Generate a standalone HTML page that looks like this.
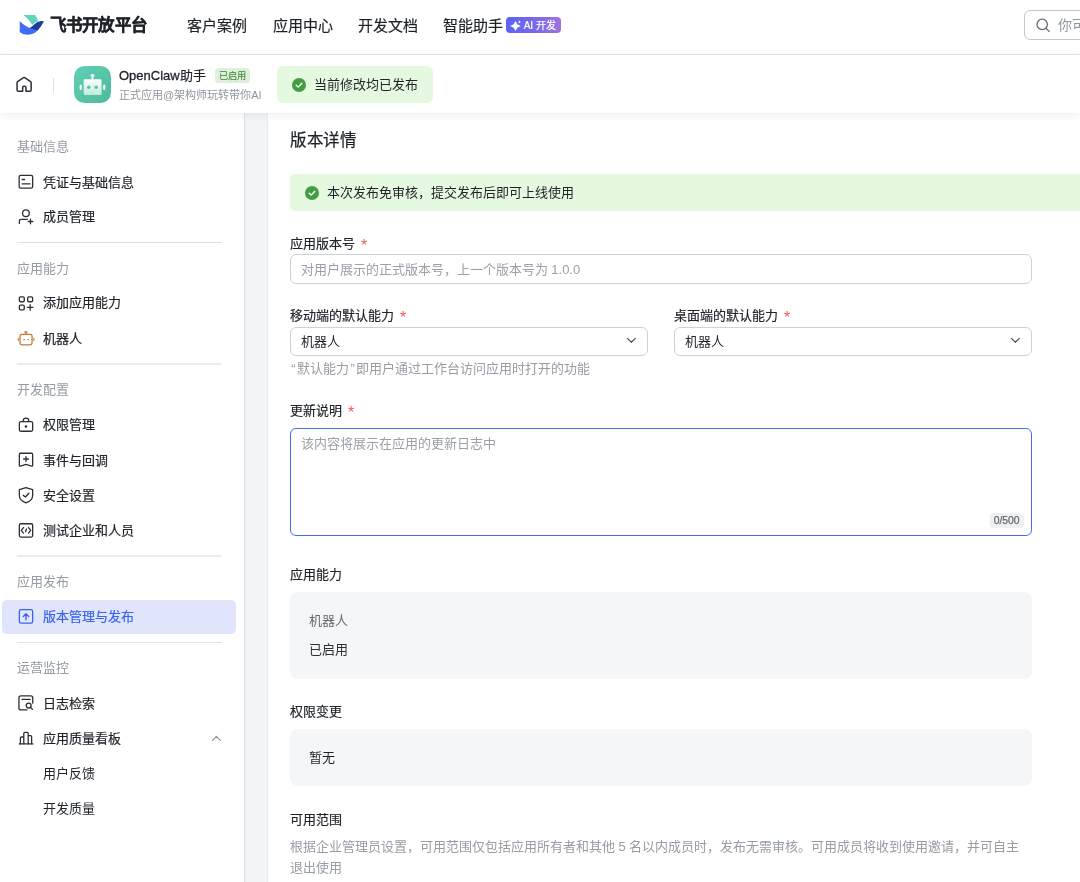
<!DOCTYPE html>
<html lang="zh-CN">
<head>
<meta charset="utf-8">
<title>飞书开放平台</title>
<style>
*{box-sizing:border-box;margin:0;padding:0}
html,body{width:1080px;height:882px;overflow:hidden;background:#fff}
body{font-family:"Liberation Sans",sans-serif;color:#1f2329;position:relative;font-size:13px}
#root{position:absolute;left:0;top:0;width:1080px;height:882px;will-change:transform}
.t{position:absolute;white-space:nowrap;line-height:20px;height:20px;margin-top:-10px}
svg{position:absolute;overflow:visible}
/* regions */
#topnav{position:absolute;left:0;top:0;width:1080px;height:55px;background:#fff;border-bottom:1px solid #e3e4e6}
#apphead{position:absolute;left:0;top:55px;width:1080px;height:58px;background:#fff;box-shadow:0 2px 8px rgba(31,35,41,.075);z-index:5}
#side{position:absolute;left:0;top:113px;width:245px;height:769px;background:#fff;border-right:1px solid #dee0e3}
#gap{position:absolute;left:245px;top:113px;width:23px;height:769px;background:#f3f4f6;border-right:1px solid #ebecee}
#main{position:absolute;left:268px;top:113px;width:812px;height:769px;background:#fff}
/* top nav */
.brand{left:49.5px;top:25px;font-size:16.49px;letter-spacing:0.3px;font-weight:700;color:#1f2329;-webkit-text-stroke:0.35px #1f2329}
.nav{top:25.6px;font-size:15px;color:#1f2329;-webkit-text-stroke:0.18px #1f2329}
.aibadge{position:absolute;left:506px;top:16.6px;width:55px;height:16.6px;border-radius:4px;background:linear-gradient(90deg,#5b63f3 0%,#7b6aea 55%,#a271dc 100%)}
.aibadge .t{left:17.7px;top:9px;font-size:10px;color:#fff;font-weight:500;-webkit-text-stroke:0.2px #fff}
.search{position:absolute;left:1024px;top:10px;width:70px;height:30px;border:1px solid #c4c8ce;border-radius:6px;background:#fff}
/* app head (coords relative to page via body-level absolute) */
.hdiv{position:absolute;left:53px;top:78px;width:1px;height:15px;background:#dee0e3;z-index:6}
.appicon{position:absolute;left:74.3px;top:65.8px;width:37px;height:37px;border-radius:10.5px;background:linear-gradient(135deg,#61d0b5 0%,#50b99b 100%);z-index:6}
.appname{left:119px;top:75.5px;font-size:13px;font-weight:500;z-index:6;-webkit-text-stroke:0.2px #1f2329}
.enabled{position:absolute;left:215px;top:67.5px;width:35px;height:15px;border-radius:3.5px;background:#def0db;z-index:6}
.enabled .t{left:3.6px;top:8px;font-size:9.3px;letter-spacing:0.35px;color:#3a8234;font-weight:500}
.appsub{left:119px;top:95px;font-size:11px;color:#8f959e;z-index:6}
.pill{position:absolute;left:277px;top:66px;width:156px;height:37px;border-radius:6px;background:#e5f9e1;z-index:6}
.pill .t{left:37.3px;top:18.5px;font-size:13px;color:#1f2329}
/* sidebar */
.sh{left:17px;font-size:13px;color:#959aa3}
.si{left:43px;font-size:13px;font-weight:500;color:#1f2329;-webkit-text-stroke:0.2px currentColor}
.ss{left:43px;font-size:13px;color:#1f2329}
.sd{position:absolute;left:17px;width:205px;height:1px;background:#dee0e3}
.active{position:absolute;left:2px;top:600px;width:234px;height:33.5px;border-radius:5px;background:#e0e5fb}
/* main */
.h1{left:290px;top:139.5px;font-size:16.49px;letter-spacing:0.6px;font-weight:500;-webkit-text-stroke:0.25px #1f2329}
.alert{position:absolute;left:290px;top:174px;width:800px;height:37px;border-radius:5px;background:#e5f9e1}
.lb{left:290px;font-size:13px;font-weight:500;-webkit-text-stroke:0.2px #1f2329}
.lb i{-webkit-text-stroke:0;font-style:normal;color:#ee5a55;font-weight:400;margin-left:6px;font-size:16px;line-height:0;position:relative;top:3.4px}
.inp{position:absolute;border:1px solid #d0d3d6;border-radius:6px;background:#fff}
.ph{font-size:13px;color:#9ba0a8}
.help{font-size:13px;color:#979ca5}
.q{display:inline-block;width:7px;text-align:center}
.box{position:absolute;left:290px;width:742px;border-radius:8px;background:#f5f6f7}
</style>
</head>
<body>
<div id="root">
<div id="topnav">
  <svg style="left:14px;top:10px" width="36" height="30" viewBox="14 10 36 30">
    <path d="M23.5 15.1 L35 15.1 Q36.9 17.6 38.2 20.9 Q35 22 32.4 25.1 Q29 19.4 23.5 15.1 Z" fill="#5fd4bb"/>
    <path d="M19.7 21.3 Q24 25.6 29.5 27.9 L34 27 L38.3 29.6 L38 30.3 Q34 34.5 28.3 34.7 Q23 34.5 20.2 32.4 Q19.7 32 19.7 31.4 Z" fill="#3f6df5"/>
    <path d="M30 27.8 Q33 26 35 23.8 Q38.5 20.3 43.9 21.3 Q41.5 26.5 37.8 30.3 Q34 30 30 27.8 Z" fill="#1f3a9c"/>
  </svg>
  <div class="t brand">飞书开放平台</div>
  <div class="t nav" style="left:187px">客户案例</div>
  <div class="t nav" style="left:272.5px">应用中心</div>
  <div class="t nav" style="left:358px">开发文档</div>
  <div class="t nav" style="left:443.3px">智能助手</div>
  <div class="aibadge">
    <svg style="left:0;top:0" width="20" height="17" viewBox="0 0 20 17"><path d="M9.5 4.20 C11.00 7.27 11.30 7.56 14.50 9.0 C11.30 10.44 11.00 10.73 9.5 13.80 C8.00 10.73 7.70 10.44 4.50 9.0 C7.70 7.56 8.00 7.27 9.5 4.20 Z" fill="#fff" stroke="#fff" stroke-width="0.3" stroke-linejoin="round"/><path d="M13.4 3.20 C13.83 4.39 13.91 4.48 15.10 4.9 C13.91 5.33 13.83 5.41 13.4 6.60 C12.97 5.41 12.89 5.33 11.70 4.9 C12.89 4.48 12.97 4.39 13.4 3.20 Z" fill="#fff"/></svg>
    <div class="t">AI 开发</div>
  </div>
  <div class="search">
    <svg style="left:11px;top:7px" width="15" height="15" viewBox="0 0 15 15" fill="none" stroke="#646a73" stroke-width="1.3" stroke-linecap="round"><circle cx="6.2" cy="6.4" r="5.2"/><path d="M10.2 10.4 L13 13.2"/></svg>
    <div class="t" style="left:33px;top:14px;font-size:14px;color:#8f959e">你可以搜索</div>
  </div>
</div>
<div id="apphead"></div>
<svg style="left:16px;top:76px;z-index:6" width="16" height="17" viewBox="0 0 16 17" fill="none" stroke="#2b2f36" stroke-width="1.5" stroke-linejoin="round" stroke-linecap="round"><path d="M1.05 6.7 Q1.05 6 1.6 5.6 L7.5 1.65 Q8.1 1.25 8.7 1.65 L14.6 5.6 Q15.15 6 15.15 6.7 V13.9 Q15.15 15.15 13.9 15.15 H9.95 V11.5 Q9.95 10.35 8.8 10.35 H7.8 Q6.65 10.35 6.65 11.5 V15.15 H2.3 Q1.05 15.15 1.05 13.9 Z"/></svg>
<div class="hdiv"></div>
<div class="appicon">
  <svg style="left:0;top:0" width="37" height="37" viewBox="0 0 37 37">
    <defs><linearGradient id="rb" x1="0" y1="0" x2="0" y2="1"><stop offset="0" stop-color="#fbfefd"/><stop offset="1" stop-color="#bfeadd"/></linearGradient></defs>
    <ellipse cx="18.5" cy="9.6" rx="2.05" ry="1.5" fill="#fff"/><rect x="17.55" y="9.6" width="1.9" height="4.2" fill="#fff"/>
    <rect x="9.7" y="13.3" width="17.9" height="15.8" rx="1.4" fill="url(#rb)"/>
    <rect x="5.6" y="18.6" width="2.2" height="5.4" rx="1.1" fill="#f1fbf8"/><rect x="29.15" y="18.6" width="2.2" height="5.4" rx="1.1" fill="#f1fbf8"/>
    <circle cx="14.8" cy="21.2" r="1.75" fill="#57c4a6"/><circle cx="22.2" cy="21.2" r="1.75" fill="#57c4a6"/>
  </svg>
</div>
<div class="t appname"><span style="-webkit-text-stroke:0.3px #1f2329">OpenClaw</span>助手</div>
<div class="enabled"><div class="t">已启用</div></div>
<div class="t appsub">正式应用@架构师玩转带你AI</div>
<div class="pill">
  <svg style="left:15px;top:11.5px" width="14" height="14" viewBox="0 0 14 14"><circle cx="7" cy="7" r="7" fill="#459d43"/><path d="M4.2 7.2 L6.2 9.1 L9.8 5.3" fill="none" stroke="#fff" stroke-width="1.35" stroke-linecap="round" stroke-linejoin="round"/></svg>
  <div class="t">当前修改均已发布</div>
</div>

<div id="side"></div>
<div id="gap"></div>
<div id="main"></div>

<!-- SIDEBAR CONTENT -->
<div class="t sh" style="top:146.5px">基础信息</div>
<div class="t si" style="top:182.6px">凭证与基础信息</div>
<div class="t si" style="top:217.2px">成员管理</div>
<div class="sd" style="top:242px;background:#dfe0e2"></div>
<div class="t sh" style="top:268.7px">应用能力</div>
<div class="t si" style="top:303.4px">添加应用能力</div>
<div class="t si" style="top:338.7px">机器人</div>
<div class="sd" style="top:363px;height:2px;background:#ecedee"></div>
<div class="t sh" style="top:389.8px">开发配置</div>
<div class="t si" style="top:425px">权限管理</div>
<div class="t si" style="top:460.8px">事件与回调</div>
<div class="t si" style="top:496px">安全设置</div>
<div class="t si" style="top:530.8px">测试企业和人员</div>
<div class="sd" style="top:555px;height:2px;background:#ecedee"></div>
<div class="t sh" style="top:581.5px">应用发布</div>
<div class="active"></div>
<div class="t si" style="top:616.8px;color:#3a63f0">版本管理与发布</div>
<div class="sd" style="top:642px;background:#e2e3e5"></div>
<div class="t sh" style="top:668.2px">运营监控</div>
<div class="t si" style="top:703.6px">日志检索</div>
<div class="t si" style="top:739px">应用质量看板</div>
<div class="t ss" style="top:773.5px">用户反馈</div>
<div class="t ss" style="top:809.2px">开发质量</div>

<!-- SIDEBAR ICONS (page coordinates) -->
<svg style="left:0;top:0;z-index:3" width="245" height="882" viewBox="0 0 245 882" fill="none" stroke="#2b2f36" stroke-width="1.3" stroke-linecap="round" stroke-linejoin="round">
  <!-- card -->
  <rect x="19.15" y="175.35" width="13.5" height="12.7" rx="1.6"/>
  <path d="M22.1 179.5 H24.6 M22.1 183.8 H30.1"/>
  <!-- user plus -->
  <circle cx="25.9" cy="213.3" r="3.35"/>
  <path d="M19.4 223.4 V221 Q19.4 219.3 21.1 219.3 H27.4 M28.2 221.5 H32.8 M30.5 219.2 V223.8"/>
  <!-- grid plus -->
  <rect x="19.35" y="296.85" width="4.9" height="4.9" rx="1.1"/>
  <rect x="27.7" y="296.85" width="4.9" height="4.9" rx="1.1"/>
  <rect x="19.35" y="305.05" width="4.9" height="4.9" rx="1.1"/>
  <path d="M27.4 307.4 H32.9 M30.15 304.7 V310.2"/>
  <!-- robot (orange) -->
  <g stroke="#c47a3c">
    <rect x="20.05" y="334.3" width="12" height="10.6" rx="1.8"/>
    <path d="M25.9 334 V332.2 M24.9 332 H26.9" stroke-width="1.5"/>
    <path d="M18.25 338.3 V340.6 M33.85 338.3 V340.6" stroke-width="1.1"/>
    <path d="M23.8 339.5 H24.4 M27.7 339.5 H28.3" stroke-width="1.25"/>
  </g>
  <!-- lock -->
  <rect x="19.35" y="421.65" width="13.3" height="9.6" rx="1.5"/>
  <path d="M23.2 421.5 V420.9 Q23.2 418.2 26 418.2 Q28.8 418.2 28.8 420.9 V421.5"/>
  <circle cx="25.95" cy="426.6" r="1.25" fill="#2b2f36" stroke="none"/>
  <!-- bookmark plus -->
  <path d="M20.5 453.25 H31.5 Q32.65 453.25 32.65 454.4 V465.2 Q32.65 466.3 31.6 466 L26 464.4 L20.4 466 Q19.35 466.3 19.35 465.2 V454.4 Q19.35 453.25 20.5 453.25 Z"/>
  <path d="M23.6 459 H28.4 M26 456.6 V461.4"/>
  <!-- shield check -->
  <path d="M26 487.6 L32.65 489.5 V495.2 C32.65 499.4 29.6 501.6 26 502.9 C22.4 501.6 19.35 499.4 19.35 495.2 V489.5 Z"/>
  <path d="M23.2 495.2 L25.4 497 L28.9 493.3"/>
  <!-- code box -->
  <rect x="19.35" y="523.75" width="13.3" height="13.3" rx="1.5"/>
  <path d="M23.5 527.6 L21.3 530.35 L23.5 533.1 M28.5 527.6 L30.7 530.35 L28.5 533.1 M26.5 529 L25.5 531.7"/>
  <!-- upload box (blue) -->
  <g stroke="#3a63f0">
    <rect x="19.35" y="609.7" width="13.3" height="13.5" rx="1.7"/>
    <path d="M25.95 619.8 V614 M23.3 616.5 L25.95 613.8 L28.7 616.5" stroke-width="1.4"/>
  </g>
  <!-- log search -->
  <path d="M27 709.85 H20.9 Q18.95 709.85 18.95 707.9 V697.9 Q18.95 695.95 20.9 695.95 H30.8 Q32.75 695.95 32.75 697.9 V703.2"/>
  <path d="M22 699.3 H30.2"/>
  <circle cx="28.7" cy="705.6" r="2.45"/>
  <path d="M30.6 707.5 L32.5 709.4"/>
  <!-- bar chart -->
  <path d="M19.3 743.9 H32.9"/>
  <path d="M20.4 743.8 V738 Q20.4 737 21.4 737 H23.8 M23.8 743.8 V733.4 Q23.8 732.4 24.8 732.4 H27.2 Q28.2 732.4 28.2 733.4 V743.8 M28.2 735.6 H30.6 Q31.6 735.6 31.6 736.6 V743.8"/>
  <!-- chevron up -->
  <path d="M212.4 740.4 L216.4 736.3 L220.4 740.4" stroke="#8f959e" stroke-width="1.2"/>
</svg>
<!-- MAIN CONTENT -->
<div class="t h1">版本详情</div>
<div class="alert">
  <svg style="left:15.2px;top:11.8px" width="14" height="14" viewBox="0 0 14 14"><circle cx="7" cy="7" r="7" fill="#459d43"/><path d="M4.2 7.2 L6.2 9.1 L9.8 5.3" fill="none" stroke="#fff" stroke-width="1.35" stroke-linecap="round" stroke-linejoin="round"/></svg>
  <div class="t" style="left:37.2px;top:18.8px;font-size:13px">本次发布免审核，提交发布后即可上线使用</div>
</div>
<div class="t lb" style="top:243.5px">应用版本号<i>*</i></div>
<div class="inp" style="left:290px;top:254px;width:742px;height:30px"><div class="t ph" style="left:9.7px;top:14.7px">对用户展示的正式版本号，上一个版本号为 1.0.0</div></div>
<div class="t lb" style="top:316px">移动端的默认能力<i>*</i></div>
<div class="t lb" style="top:316px;left:674px">桌面端的默认能力<i>*</i></div>
<div class="inp" style="left:290px;top:326.5px;width:358px;height:29.5px"><div class="t" style="left:10px;top:14px;font-size:13px">机器人</div>
  <svg style="left:335px;top:9.8px" width="11" height="8" viewBox="0 0 11 8" fill="none" stroke="#51565d" stroke-width="1.25" stroke-linecap="round" stroke-linejoin="round"><path d="M1.5 1.4 L5.4 5.3 L9.3 1.4"/></svg></div>
<div class="inp" style="left:674px;top:326.5px;width:358px;height:29.5px"><div class="t" style="left:10px;top:14px;font-size:13px">机器人</div>
  <svg style="left:335px;top:9.8px" width="11" height="8" viewBox="0 0 11 8" fill="none" stroke="#51565d" stroke-width="1.25" stroke-linecap="round" stroke-linejoin="round"><path d="M1.5 1.4 L5.4 5.3 L9.3 1.4"/></svg></div>
<div class="t help" style="left:290px;top:368.5px"><span class="q">“</span>默认能力<span class="q" style="width:7.3px">”</span>即用户通过工作台访问应用时打开的功能</div>
<div class="t lb" style="top:411px">更新说明<i>*</i></div>
<div class="inp" style="left:290px;top:428px;width:742px;height:108px;border-color:#4470ee"><div class="t ph" style="left:9.7px;top:14.5px">该内容将展示在应用的更新日志中</div>
  <div style="position:absolute;left:698.6px;top:84px;width:34.3px;height:14.8px;border-radius:3.5px;background:#eff0f1"><div class="t" style="left:4.2px;top:7.8px;font-size:10.3px;color:#646a73;-webkit-text-stroke:0.25px #646a73">0/500</div></div>
</div>
<div class="t lb" style="top:574.5px">应用能力</div>
<div class="box" style="top:592px;height:87px">
  <div class="t" style="left:19px;top:28.6px;font-size:13px;color:#646a73">机器人</div>
  <div class="t" style="left:19px;top:57.5px;font-size:13px;color:#2b2f36">已启用</div>
</div>
<div class="t lb" style="top:711.5px">权限变更</div>
<div class="box" style="top:729px;height:57px">
  <div class="t" style="left:19px;top:29px;font-size:13px;color:#1f2329">暂无</div>
</div>
<div class="t lb" style="top:820px">可用范围</div>
<div class="t help" style="left:290px;top:847px">根据企业管理员设置，可用范围仅包括应用所有者和其他 5 名以内成员时，发布无需审核。可用成员将收到使用邀请，并可自主</div>
<div class="t help" style="left:290px;top:867.5px">退出使用</div>
</div>
</body>
</html>
